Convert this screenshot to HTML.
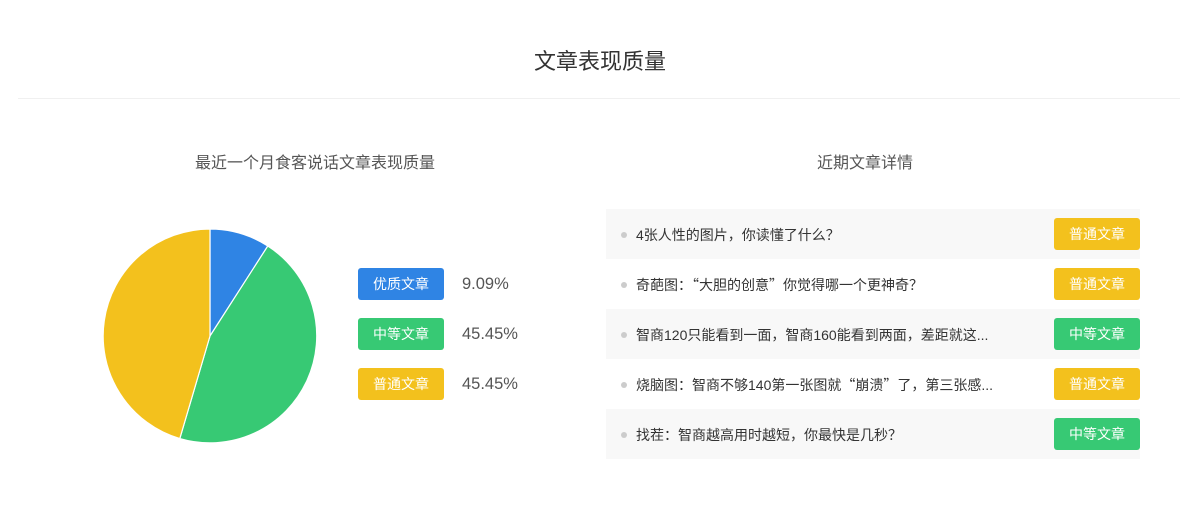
<!DOCTYPE html>
<html><head><meta charset="utf-8"><style>
body{margin:0;width:1200px;height:529px;background:#fff;font-family:"Liberation Sans","Noto Sans CJK SC",sans-serif;position:relative;overflow:hidden;color:#333}
.a{position:absolute}
.cjk{font-family:"Noto Sans CJK SC","Liberation Sans",sans-serif}
.t{left:0;width:1200px;text-align:center;top:44px;font-size:22px;color:#333}
.hr{left:18px;width:1162px;top:98px;height:1px;background:#f0f0f0}
.st{font-size:16px;color:#555;top:149px;text-align:center}
.btn{width:86px;height:32px;border-radius:3px;color:#fff;font-size:14px;line-height:32px;text-align:center}
.b{background:#2f84e4}.g{background:#37c974}.y{background:#f3c11d}
.pct{font-size:16.5px;color:#555;left:462px}
.row{left:606px;width:534px;height:50px}
.row.s{background:#f8f8f8}
.row .dot{position:absolute;left:15px;top:23px;width:6px;height:6px;border-radius:50%;background:#ccc}
.row .tx{position:absolute;left:30px;top:1px;line-height:50px;font-size:14px;color:#333}
.row .btn{position:absolute;right:0;top:9px}
</style></head><body>
<div class="a t">文章表现质量</div>
<div class="a hr"></div>
<div class="a st" style="left:115px;width:400px">最近一个月食客说话文章表现质量</div>
<div class="a st" style="left:665px;width:400px">近期文章详情</div>
<svg class="a" style="left:0;top:0" width="600" height="529">
<path d="M210,336 L210,229 A107,107 0 0 1 267.8,246 Z" fill="#2f84e4" stroke="#fff" stroke-width="1.2"/>
<path d="M210,336 L267.8,246 A107,107 0 0 1 179.8,438.6 Z" fill="#37c974" stroke="#fff" stroke-width="1.2"/>
<path d="M210,336 L179.8,438.6 A107,107 0 0 1 210,229 Z" fill="#f3c11d" stroke="#fff" stroke-width="1.2"/>
</svg>
<div class="a btn b" style="left:358px;top:268px">优质文章</div>
<div class="a pct" style="top:275px">9.09%</div>
<div class="a btn g" style="left:358px;top:318px">中等文章</div>
<div class="a pct" style="top:325px">45.45%</div>
<div class="a btn y" style="left:358px;top:368px">普通文章</div>
<div class="a pct" style="top:375px">45.45%</div>

<div class="a row s" style="top:209px"><span class="dot"></span><span class="tx">4张人性的图片<span class="cjk">，</span>你读懂了什么<span class="cjk">？</span></span><span class="btn y">普通文章</span></div>
<div class="a row" style="top:259px"><span class="dot"></span><span class="tx">奇葩图<span class="cjk">：“</span>大胆的创意<span class="cjk">”</span>你觉得哪一个更神奇<span class="cjk">？</span></span><span class="btn y">普通文章</span></div>
<div class="a row s" style="top:309px"><span class="dot"></span><span class="tx">智商120只能看到一面<span class="cjk">，</span>智商160能看到两面<span class="cjk">，</span>差距就这...</span><span class="btn g">中等文章</span></div>
<div class="a row" style="top:359px"><span class="dot"></span><span class="tx">烧脑图<span class="cjk">：</span>智商不够140第一张图就<span class="cjk">“</span>崩溃<span class="cjk">”</span>了<span class="cjk">，</span>第三张感...</span><span class="btn y">普通文章</span></div>
<div class="a row s" style="top:409px"><span class="dot"></span><span class="tx">找茬<span class="cjk">：</span>智商越高用时越短<span class="cjk">，</span>你最快是几秒<span class="cjk">？</span></span><span class="btn g">中等文章</span></div>
</body></html>
